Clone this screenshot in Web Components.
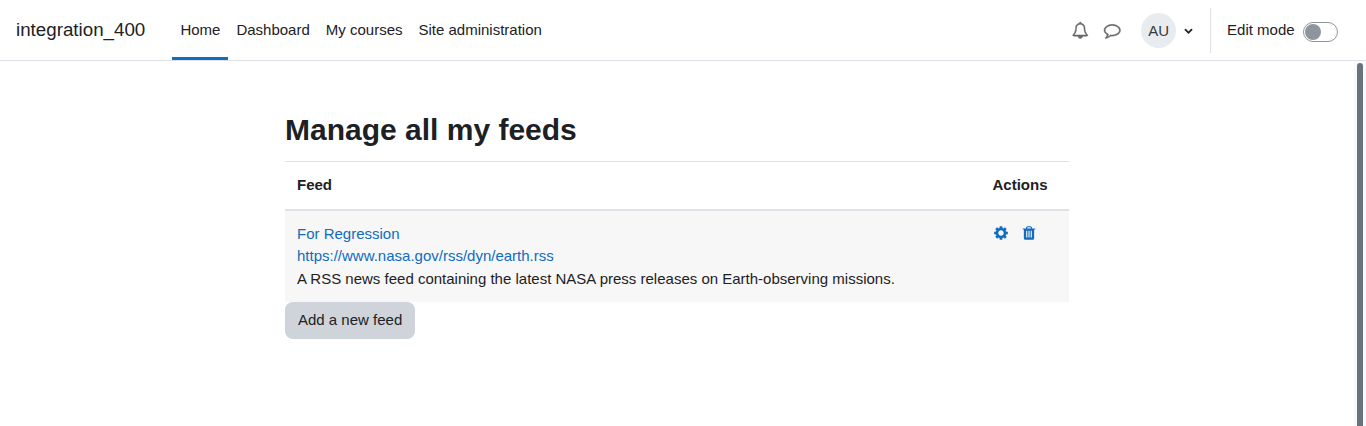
<!DOCTYPE html>
<html lang="en">
<head>
<meta charset="utf-8">
<title>Manage all my feeds</title>
<style>
  :root {
    --ink: #1d2125;
    --primary: #0f6cbf;
    --line: #dee2e6;
    --muted: #8f959e;
  }
  html, body {
    margin: 0;
    height: 100%;
    overflow: hidden;
    background: #fff;
  }
  body {
    color: var(--ink);
    font: 15px/22.5px "Liberation Sans", Arial, sans-serif;
  }
</style>
</head>
<body>
<app-shell>
  <top-bar slot="header" brand="integration_400">
    <nav-item slot="nav" active>Home</nav-item>
    <nav-item slot="nav">Dashboard</nav-item>
    <nav-item slot="nav">My courses</nav-item>
    <nav-item slot="nav">Site administration</nav-item>
    <fa-icon slot="tools" name="bell"></fa-icon>
    <fa-icon slot="tools" name="comment"></fa-icon>
    <user-menu slot="user">AU</user-menu>
    <edit-switch slot="edit">Edit mode</edit-switch>
  </top-bar>
  <page-heading>Manage all my feeds</page-heading>
  <feed-table>
    <feed-row href="https://www.nasa.gov/rss/dyn/earth.rss" label="For Regression">A RSS news feed containing the latest NASA press releases on Earth-observing missions.</feed-row>
  </feed-table>
  <action-button>Add a new feed</action-button>
</app-shell>

<script>
const ICONS = {
  bell: 'M912 1696q0-16-16-16-59 0-101.5-42.5t-42.5-101.5q0-16-16-16t-16 16q0 73 51.5 124.5t124.5 51.5q16 0 16-16zm-666-288h1300q-266-300-266-832 0-51-24-105t-69-103-121.5-80.5-169.5-31.5-169.5 31.5-121.5 80.5-69 103-24 105q0 532-266 832zm1482 0q0 52-38 90t-90 38h-448q0 106-75 181t-181 75-181-75-75-181h-448q-52 0-90-38t-38-90q50-42 91-88t85-119.5 74.5-158.5 50-206 19.5-260q0-152 117-282.5t307-158.5q-8-19-8-39 0-40 28-68t68-28 68 28 28 68q0 20-8 39 190 28 307 158.5t117 282.5q0 139 19.5 260t50 206 74.5 158.5 85 119.5 91 88z',
  comment: 'M896 384q-204 0-381.5 69.5t-282 187.5-104.5 255q0 112 71.5 213.5t201.5 175.5l87 50-27 96q-24 91-70 172 152-63 275-171l43-38 57 6q69 8 130 8 204 0 381.5-69.5t282-187.5 104.5-255-104.5-255-282-187.5-381.5-69.5zm896 512q0 174-120 321.5t-326 233-450 85.5q-70 0-145-8-198 175-460 242-49 14-114 22h-5q-15 0-27-10.5t-16-27.5v-1q-3-4-.5-12t2-10 4.5-9.5l6-9 7-8.5 8-9q7-8 31-34.5t34.5-38 31-39.5 32.5-51 27-59 26-76q-157-89-247.5-220t-90.5-281q0-174 120-321.5t326-233 450-85.5 450 85.5 326 233 120 321.5z',
  chevron: 'M1683 808l-742 741q-19 19-45 19t-45-19l-742-741q-19-19-19-45.5t19-45.5l166-165q19-19 45-19t45 19l531 531 531-531q19-19 45-19t45 19l166 165q19 19 19 45.5t-19 45.5z',
  cog: 'M1200 896q0-126-89-215t-215-89-215 89-89 215 89 215 215 89 215-89 89-215zM1664 787v222q0 12-8 23t-20 13l-185 28q-19 54-39 91 35 50 107 138 10 12 10 25t-9 23q-27 37-99 108t-94 71q-12 0-26-9l-138-108q-44 23-91 38-16 136-29 186-7 28-36 28h-222q-14 0-24.5-8.5t-11.5-21.5l-28-184q-49-16-90-37l-141 107q-10 9-25 9-14 0-25-11-126-114-165-168-7-10-7-23 0-12 8-23 15-21 51-66.5t54-70.5q-27-50-41-99l-183-27q-13-2-21-12.5t-8-23.5v-222q0-12 8-23t19-13l186-28q14-46 39-92-40-57-107-138-10-12-10-24 0-10 9-23 26-36 98.5-107.5t94.5-71.5q13 0 26 10l138 107q44-23 91-38 16-136 29-186 7-28 36-28h222q14 0 24.5 8.5t11.5 21.5l28 184q49 16 90 37l142-107q9-9 24-9 13 0 25 10 129 119 165 170 7 8 7 22 0 12-8 23-15 21-51 66.5t-54 70.5q26 50 41 98l183 28q13 2 21 12.5t8 23.5z',
  trash: 'M704 1376v-704q0-14-9-23t-23-9h-64q-14 0-23 9t-9 23v704q0 14 9 23t23 9h64q14 0 23-9t9-23zm256 0v-704q0-14-9-23t-23-9h-64q-14 0-23 9t-9 23v704q0 14 9 23t23 9h64q14 0 23-9t9-23zm256 0v-704q0-14-9-23t-23-9h-64q-14 0-23 9t-9 23v704q0 14 9 23t23 9h64q14 0 23-9t9-23zm-544-992h448l-48-117q-7-9-17-11h-317q-10 2-17 11zm928 32v64q0 14-9 23t-23 9h-96v948q0 83-47 143.5t-113 60.5h-832q-66 0-113-58.5t-47-141.5v-952h-96q-14 0-23-9t-9-23v-64q0-14 9-23t23-9h309l70-167q15-37 54-63t79-26h320q40 0 79 26t54 63l70 167h309q14 0 23 9t9 23z'
};

class FaIcon extends HTMLElement {
  constructor() {
    super();
    this.attachShadow({ mode: 'open' });
  }

  connectedCallback() {
    this.shadowRoot.innerHTML = `
      <style>
        :host {
          display: block;
          flex: none;
          width: var(--icon-size, 16px);
          height: var(--icon-size, 16px);
        }
        svg {
          display: block;
          width: 100%;
          height: 100%;
          fill: currentColor;
          stroke: currentColor;
          stroke-width: var(--icon-weight, 0);
          overflow: visible;
        }
      </style>
      <svg viewBox="0 0 1792 1792" aria-hidden="true"><path d="${ICONS[this.getAttribute('name')]}"/></svg>
    `;
  }
}

class AppShell extends HTMLElement {
  constructor() {
    super();
    this.attachShadow({ mode: 'open' });
    this.shadowRoot.innerHTML = `
      <style>
        :host {
          display: grid;
          grid-template: 61px 1fr / 1fr 12px;
          height: 100vh;
        }
        header {
          grid-column: 1 / -1;
        }
        main {
          box-sizing: border-box;
          width: 784px;
          margin-left: 285px;
          padding-top: 51px;
        }
        .track {
          box-sizing: border-box;
          padding: 2px 3px 0;
          background: #f8f9fa;
          overflow: hidden;
        }
        .thumb {
          height: 400px;
          border-radius: 3px;
          background: #6a737b;
        }
      </style>
      <header><slot name="header"></slot></header>
      <main><slot></slot></main>
      <div class="track"><div class="thumb"></div></div>
    `;
  }
}

class TopBar extends HTMLElement {
  constructor() {
    super();
    this.attachShadow({ mode: 'open' });
  }

  connectedCallback() {
    this.shadowRoot.innerHTML = `
      <style>
        :host {
          display: flex;
          box-sizing: border-box;
          height: 61px;
          padding: 0 28px 0 16px;
          border-bottom: 1px solid var(--line);
          background: #fff;
        }
        .brand {
          width: 156.4px;
          font-size: 18.75px;
          line-height: 60px;
        }
        nav {
          display: flex;
        }
        .tools {
          display: flex;
          align-items: center;
          gap: 15.5px;
          margin-left: auto;
          color: #666;
          --icon-size: 16.5px;
          --icon-weight: 50;
        }
        .user {
          display: flex;
          align-items: center;
          margin-left: 20.4px;
        }
        .edit {
          display: flex;
          align-items: center;
          height: 45px;
          margin: 8px 0 0 17px;
          padding-left: 16px;
          border-left: 1px solid var(--line);
        }
      </style>
      <div class="brand">${this.getAttribute('brand')}</div>
      <nav><slot name="nav"></slot></nav>
      <div class="tools"><slot name="tools"></slot></div>
      <div class="user"><slot name="user"></slot></div>
      <div class="edit"><slot name="edit"></slot></div>
    `;
  }
}

class NavItem extends HTMLElement {
  constructor() {
    super();
    this.attachShadow({ mode: 'open' });
    this.shadowRoot.innerHTML = `
      <style>
        :host {
          display: block;
          box-sizing: border-box;
          height: 60px;
          padding: 0 8px;
          border-bottom: 3px solid transparent;
          line-height: 60px;
          white-space: nowrap;
        }
        :host([active]) {
          border-color: var(--primary);
        }
      </style>
      <slot></slot>
    `;
  }
}

class UserMenu extends HTMLElement {
  constructor() {
    super();
    this.attachShadow({ mode: 'open' });
    this.shadowRoot.innerHTML = `
      <style>
        :host {
          display: flex;
          align-items: center;
          gap: 8px;
        }
        .avatar {
          width: 35px;
          height: 35px;
          border-radius: 50%;
          background: #e9ecef;
          color: #343a40;
          line-height: 35px;
          text-align: center;
        }
        fa-icon {
          --icon-size: 9px;
        }
      </style>
      <div class="avatar"><slot></slot></div>
      <fa-icon name="chevron"></fa-icon>
    `;
  }
}

class EditSwitch extends HTMLElement {
  constructor() {
    super();
    this.attachShadow({ mode: 'open' });
    this.shadowRoot.innerHTML = `
      <style>
        :host {
          display: flex;
          align-items: center;
          gap: 8.4px;
          white-space: nowrap;
        }
        .switch {
          box-sizing: border-box;
          width: 35px;
          height: 20px;
          margin-top: 3px;
          padding: 1px;
          border: 1px solid var(--muted);
          border-radius: 10px;
        }
        .knob {
          width: 16px;
          height: 16px;
          border-radius: 50%;
          background: var(--muted);
        }
      </style>
      <span><slot></slot></span>
      <div class="switch"><div class="knob"></div></div>
    `;
  }
}

class PageHeading extends HTMLElement {
  constructor() {
    super();
    this.attachShadow({ mode: 'open' });
    this.shadowRoot.innerHTML = `
      <style>
        :host {
          display: block;
          height: 49px;
        }
        h2 {
          margin: 0;
          font-size: 30px;
          font-weight: 700;
          line-height: 36px;
        }
      </style>
      <h2><slot></slot></h2>
    `;
  }
}

class FeedTable extends HTMLElement {
  constructor() {
    super();
    this.attachShadow({ mode: 'open' });
    this.shadowRoot.innerHTML = `
      <style>
        :host {
          display: block;
        }
        .head {
          display: grid;
          grid-template-columns: 1fr 88.5px;
          box-sizing: border-box;
          height: 50px;
          border-top: 1px solid var(--line);
          border-bottom: 2px solid var(--line);
          font-weight: 700;
        }
        .head div {
          padding: 12px;
        }
      </style>
      <div class="head"><div>Feed</div><div>Actions</div></div>
      <slot></slot>
    `;
  }
}

class FeedRow extends HTMLElement {
  constructor() {
    super();
    this.attachShadow({ mode: 'open' });
  }

  connectedCallback() {
    const href = this.getAttribute('href');
    this.shadowRoot.innerHTML = `
      <style>
        :host {
          display: grid;
          grid-template-columns: 1fr 88.5px;
          box-sizing: border-box;
          height: 91px;
          background: #f7f7f7;
        }
        .feed {
          padding: 11.75px 12px;
        }
        a {
          color: var(--primary);
          text-decoration: none;
        }
        .actions {
          display: flex;
          gap: 12px;
          padding: 14px 12px;
          color: var(--primary);
        }
      </style>
      <div class="feed">
        <div><a href="#">${this.getAttribute('label')}</a></div>
        <div><a href="#">${href}</a></div>
        <div><slot></slot></div>
      </div>
      <div class="actions">
        <fa-icon name="cog"></fa-icon>
        <fa-icon name="trash"></fa-icon>
      </div>
    `;
  }
}

class ActionButton extends HTMLElement {
  constructor() {
    super();
    this.attachShadow({ mode: 'open' });
    this.shadowRoot.innerHTML = `
      <style>
        :host {
          display: block;
        }
        button {
          display: block;
          height: 37px;
          padding: 0 13px;
          border: 0;
          border-radius: 8px;
          background: #ced4da;
          color: inherit;
          font: inherit;
        }
      </style>
      <button type="button"><slot></slot></button>
    `;
  }
}

customElements.define('fa-icon', FaIcon);
customElements.define('app-shell', AppShell);
customElements.define('top-bar', TopBar);
customElements.define('nav-item', NavItem);
customElements.define('user-menu', UserMenu);
customElements.define('edit-switch', EditSwitch);
customElements.define('page-heading', PageHeading);
customElements.define('feed-table', FeedTable);
customElements.define('feed-row', FeedRow);
customElements.define('action-button', ActionButton);
</script>
</body>
</html>
